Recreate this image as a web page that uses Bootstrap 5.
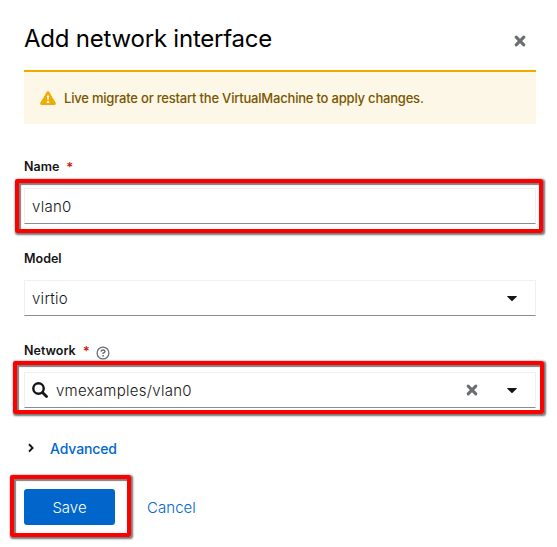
<!DOCTYPE html>
<html lang="en">
<head>
<meta charset="utf-8">
<meta name="viewport" content="width=device-width, initial-scale=1">
<title>Add network interface</title>
<link href="https://cdn.jsdelivr.net/npm/bootstrap@5.3.0/dist/css/bootstrap.min.css" rel="stylesheet">
<style>
body{font-family:Inter,"Liberation Sans",sans-serif;color:#151515;background:#fff;min-height:547px}
.dialog{width:512px;margin-left:24px;padding-top:20px}
.dialog svg{display:block;flex:none}
.dialog-head{height:50px}
.dialog-title{font-size:24px;line-height:38px;font-weight:400;color:#000;letter-spacing:-.22px}
.close-x{margin:15px 10px 0 0}
.notice{height:54px;border-top:2px solid #f0ab00;background:#fdf7e7;color:#795600;font-size:13px;font-weight:500;padding:1px 16px 0;gap:8px;letter-spacing:-.2px;margin-bottom:32px}
.notice svg{margin-top:-2px}
.field{height:92px}
.field-label{height:32px;padding-bottom:10px;font-size:12.5px;font-weight:600;line-height:22px}
.req{color:#c9190b;font-size:13px;margin-left:7px}
.help{margin:6px 0 0 6px}
.field-box{height:36px;border:1px solid #f0f0f0;border-bottom-color:#8a8d90;padding:2px 7px 0;font-size:15px;font-weight:300;letter-spacing:.27px}
.field-box svg{margin-top:-2px}
.field-box .caret{margin-right:11px}
.clear-x{margin-right:25px}
.marked{position:relative}
.marked::before{content:"";position:absolute;border:4px solid red;border-radius:2px;box-shadow:1px 1px 2px 1px rgba(0,0,0,.55),inset 2px 2px 1px rgba(0,0,0,.5);pointer-events:none}
.mark-name::before{left:-9px;right:-7px;top:-9px;bottom:-9px}
.mark-net::before{left:-11px;right:-8px;top:-11px;bottom:-6px}
.mark-save::before{left:-14px;right:-16px;top:-14px;bottom:-12px}
.advanced{height:20px;margin:6px 0 31px;padding-left:4px;gap:16px;color:#06c;font-size:14px;font-weight:500;letter-spacing:-.12px}
.actions .btn{height:36px;border:0;padding:2px 0 0;font-size:15px;line-height:34px;font-weight:300}
.actions .btn-save{width:91px;background:#06c;color:#fff;border-radius:3px}
.actions .btn-cancel{color:#06c;margin-left:32px;letter-spacing:.05px}
</style>
<script src="https://cdn.jsdelivr.net/npm/bootstrap@5.3.0/dist/js/bootstrap.bundle.min.js"></script>
</head>
<body>
<svg class="d-none">
<symbol id="x" viewBox="0 0 11 11"><path d="M2 2l7 7M9 2l-7 7" stroke="#6a6e73" stroke-width="2.8" stroke-linecap="round"/></symbol>
<symbol id="down" viewBox="0 0 10 5"><path d="M.5 0h9q.6.2.2.8L5.6 4.7q-.6.5-1.2 0L.3.8Q-.1.2.5 0z" fill="#151515"/></symbol>
</svg>
<main class="dialog">
<header class="dialog-head d-flex justify-content-between align-items-start">
<h1 class="dialog-title mb-0">Add network interface</h1>
<button class="close-x btn p-0 border-0" aria-label="Close"><svg width="12" height="12"><use href="#x"/></svg></button>
</header>
<div class="notice d-flex align-items-center" role="alert">
<svg width="16" height="14" viewBox="0 0 16 14"><path d="M6.900.7q1.100-1.300 2.200 0l6.700 11.400q.5 1.500-1.200 1.900H1.400q-1.700-.4-1.200-1.900z" fill="#f0ab00"/><path d="M7 4.500h2l-.3 4.300H7.300z" fill="#fff"/><circle cx="8" cy="11" r="1.300" fill="#fff"/></svg>
<span>Live migrate or restart the VirtualMachine to apply changes.</span>
</div>
<section class="field"><div class="field-label d-flex"><span>Name</span><span class="req">*</span></div>
<div class="marked mark-name"><div class="field-box d-flex align-items-center"><span>vlan0</span></div></div></section>
<section class="field"><div class="field-label d-flex"><span>Model</span></div>
<div class="field-box d-flex align-items-center"><span>virtio</span><svg class="caret ms-auto" width="10" height="5"><use href="#down"/></svg></div></section>
<section class="field"><div class="field-label d-flex"><span>Network</span><span class="req">*</span><svg class="help" width="14" height="14" viewBox="0 0 14 14" fill="none" stroke="#6a6e73"><circle cx="7" cy="7" r="5.900" stroke-width="1.300"/><path d="M5 5.600Q5.400 4 7.100 4t1.900 1.500Q9 6.500 7.100 7.200V8" stroke-width="1.500"/><path d="M7.100 9v1.600" stroke-width="1.600"/></svg></div>
<div class="marked mark-net"><div class="field-box d-flex align-items-center"><svg width="16" height="16" viewBox="0 0 16 16" fill="none" stroke="#151515"><circle cx="6.500" cy="6.500" r="5.200" stroke-width="2.400"/><path d="M10.500 10.500l4 4" stroke-width="2.800" stroke-linecap="round"/></svg><span class="ms-2">vmexamples/vlan0</span><svg class="clear-x ms-auto" width="12" height="12"><use href="#x"/></svg><svg class="caret ms-1" width="10" height="5"><use href="#down"/></svg></div></div></section>
<div class="advanced d-flex align-items-center"><svg width="6" height="10" viewBox="0 0 6 10" fill="none" stroke="#151515" stroke-width="2"><path d="M1 1.200l3.500 3.700L1 8.600"/></svg><span>Advanced</span></div>
<div class="actions d-flex"><div class="marked mark-save"><button class="btn btn-save">Save</button></div><button class="btn btn-cancel">Cancel</button></div>
</main>
</body>
</html>
